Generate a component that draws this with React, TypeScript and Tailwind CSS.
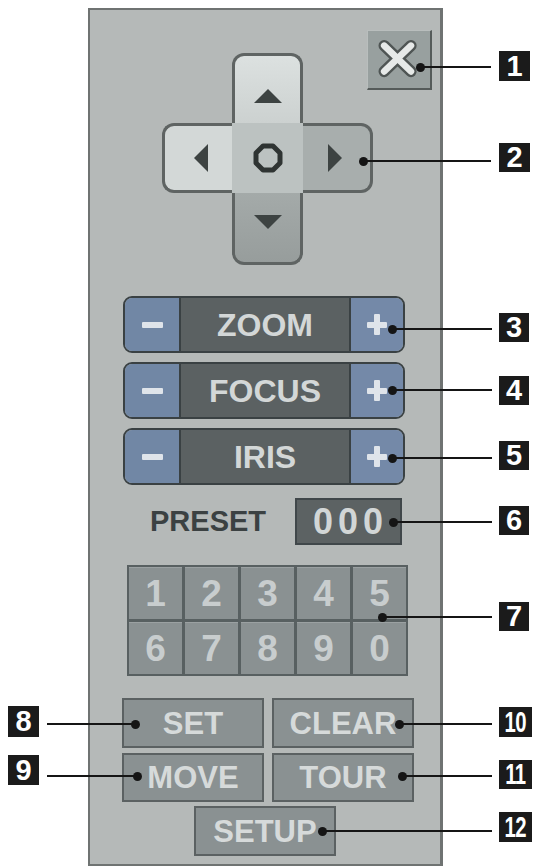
import React from "react";

// Callout annotations: dot on the control, leader line, numbered tag.
type Callout = {
  n: string;
  dot: string;
  line: string;
  tag: string;
};

const callouts: Callout[] = [
  { n: "1", dot: "left-[416px] top-[63px]", line: "left-[420px] top-[66px] w-[71px]", tag: "left-[499px] top-[51px] h-[30px] w-[31px]" },
  { n: "2", dot: "left-[359px] top-[157px]", line: "left-[363px] top-[160px] w-[128px]", tag: "left-[499px] top-[143px] h-[29px] w-[31px]" },
  { n: "3", dot: "left-[388px] top-[325px]", line: "left-[392px] top-[328px] w-[100px]", tag: "left-[499px] top-[313px] h-[29px] w-[30px]" },
  { n: "4", dot: "left-[388px] top-[386px]", line: "left-[392px] top-[389px] w-[100px]", tag: "left-[499px] top-[376px] h-[29px] w-[30px]" },
  { n: "5", dot: "left-[388px] top-[454px]", line: "left-[392px] top-[457px] w-[100px]", tag: "left-[499px] top-[441px] h-[29px] w-[30px]" },
  { n: "6", dot: "left-[389px] top-[518px]", line: "left-[393px] top-[521px] w-[99px]", tag: "left-[499px] top-[506px] h-[29px] w-[30px]" },
  { n: "7", dot: "left-[378px] top-[613px]", line: "left-[382px] top-[616px] w-[110px]", tag: "left-[499px] top-[602px] h-[29px] w-[30px]" },
  { n: "8", dot: "left-[131px] top-[720px]", line: "left-[47px] top-[723px] w-[88px]", tag: "left-[8px] top-[706px] h-[31px] w-[31px]" },
  { n: "9", dot: "left-[133px] top-[772px]", line: "left-[47px] top-[775px] w-[90px]", tag: "left-[8px] top-[755px] h-[30px] w-[31px]" },
  { n: "10", dot: "left-[395px] top-[720px]", line: "left-[399px] top-[723px] w-[93px]", tag: "left-[499px] top-[707px] h-[30px] w-[33px]" },
  { n: "11", dot: "left-[398px] top-[772px]", line: "left-[402px] top-[775px] w-[90px]", tag: "left-[499px] top-[760px] h-[29px] w-[33px]" },
  { n: "12", dot: "left-[318px] top-[827px]", line: "left-[322px] top-[830px] w-[170px]", tag: "left-[499px] top-[812px] h-[30px] w-[33px]" },
];

function Tag({ c }: { c: Callout }) {
  return (
    <>
      <div className={`absolute h-[2px] bg-[#151515] ${c.line}`} />
      <div className={`absolute h-[9px] w-[9px] rounded-full bg-[#151515] ${c.dot}`} />
      <div
        className={`absolute flex items-center justify-center bg-[#1b1b1b] text-[29px] font-bold leading-none text-white ${c.tag}`}
      >
        <span className={c.n.length > 1 ? "inline-block scale-x-[0.7] tracking-[-1px]" : ""}>{c.n}</span>
      </div>
    </>
  );
}

function Tri({ dir }: { dir: "up" | "down" | "left" | "right" }) {
  const vertical = dir === "up" || dir === "down";
  const pts = {
    up: "14,0 28,14 0,14",
    down: "0,0 28,0 14,14",
    left: "14,0 14,28 0,14",
    right: "0,0 14,14 0,28",
  }[dir];
  return (
    <svg width={vertical ? 28 : 14} height={vertical ? 14 : 28} viewBox={vertical ? "0 0 28 14" : "0 0 14 28"}>
      <polygon points={pts} fill="#3d4342" />
    </svg>
  );
}

function DPad() {
  return (
    <div className="ml-[72px] mt-[43px] grid h-[212px] w-[211px] grid-cols-[70px_71px_70px] grid-rows-[70px_70px_72px]">
      <div />
      <div className="flex items-end justify-center rounded-t-[12px] border-[3px] border-b-0 border-[#5f6463] bg-gradient-to-b from-[#dce1e0] to-[#ccd1d0] pb-[20px]">
        <Tri dir="up" />
      </div>
      <div />
      <div className="flex items-center justify-end rounded-l-[12px] border-[3px] border-r-0 border-[#5f6463] bg-[#d3d8d7] pr-[24px]">
        <Tri dir="left" />
      </div>
      <div className="flex items-center justify-center bg-[#bcc2c1]">
        <svg width="32" height="32" viewBox="0 0 32 32">
          <path d="M11 4 H21 L28 11 V21 L21 28 H11 L4 21 V11 Z" fill="none" stroke="#2f3433" strokeWidth="5" strokeLinejoin="round" />
        </svg>
      </div>
      <div className="flex items-center justify-start rounded-r-[12px] border-[3px] border-l-0 border-[#5f6463] bg-[#a8aead] pl-[25px]">
        <Tri dir="right" />
      </div>
      <div />
      <div className="flex items-start justify-center rounded-b-[12px] border-[3px] border-t-0 border-[#5f6463] bg-gradient-to-b from-[#a4aaa9] to-[#979d9c] pt-[22px]">
        <Tri dir="down" />
      </div>
      <div />
    </div>
  );
}

function Stepper({ label, first }: { label: string; first?: boolean }) {
  return (
    <div
      className={`ml-[33px] flex h-[57px] w-[282px] overflow-hidden rounded-[9px] border-2 border-[#3a4143] ${
        first ? "mt-[31px]" : "mt-[9px]"
      }`}
    >
      <div className="flex w-[56px] items-center justify-center border-r-2 border-[#3a4143] bg-[#7187a5]">
        <div className="h-[6px] w-[21px] rounded-[1px] bg-[#dfe4ea]" />
      </div>
      <div className="flex flex-1 items-center justify-center bg-[#5b6162] text-[32px] font-bold leading-none text-[#d3d7d7]">
        {label}
      </div>
      <div className="relative flex w-[54px] items-center justify-center border-l-2 border-[#3a4143] bg-[#7489a8]">
        <div className="absolute h-[6px] w-[20px] rounded-[1px] bg-[#dfe4ea]" />
        <div className="absolute h-[21px] w-[6px] rounded-[1px] bg-[#dfe4ea]" />
      </div>
    </div>
  );
}

function ActionButton({ label, className = "" }: { label: string; className?: string }) {
  return (
    <div
      className={`flex w-[142px] items-center justify-center border-2 border-[#5b6162] bg-[#8a9192] text-[31px] font-bold leading-none text-[#d6dada] ${className}`}
    >
      {label}
    </div>
  );
}

export default function App() {
  return (
    <div className="relative h-[868px] w-[537px] overflow-hidden bg-white font-['Liberation_Sans',Arial,sans-serif]">
      <div className="ml-[88px] pt-[8px]">
        <div className="relative flex h-[858px] w-[355px] flex-col border-2 border-r-[3px] border-[#6f7372] bg-[#b5b9b8]">
          {/* close button */}
          <div className="absolute right-[8px] top-[20px] flex h-[60px] w-[65px] items-center justify-center border-b-2 border-l border-r-2 border-t border-b-[#555b5a] border-l-[#b9bebd] border-r-[#555b5a] border-t-[#b9bebd] bg-[#98a09f]">
            <svg width="65" height="60" viewBox="0 0 65 60">
              <g strokeLinecap="round">
                <line x1="17" y1="15" x2="45" y2="42" stroke="#4f5554" strokeWidth="12" />
                <line x1="45" y1="15" x2="17" y2="42" stroke="#4f5554" strokeWidth="12" />
                <line x1="17" y1="15" x2="45" y2="42" stroke="#e6e9e8" strokeWidth="7" />
                <line x1="45" y1="15" x2="17" y2="42" stroke="#e6e9e8" strokeWidth="7" />
              </g>
            </svg>
          </div>

          <DPad />

          <Stepper label="ZOOM" first />
          <Stepper label="FOCUS" />
          <Stepper label="IRIS" />

          <div className="ml-[60px] mt-[13px] flex items-center">
            <span className="w-[145px] text-[29px] font-bold leading-none text-[#3b4142]">PRESET</span>
            <div className="flex h-[47px] w-[107px] items-center justify-center border-2 border-[#40474a] bg-[#5c6263] pl-[4px] text-[36px] font-bold leading-none tracking-[5px] text-[#d2d6d6]">
              000
            </div>
          </div>

          <div className="ml-[37px] mt-[20px] grid h-[111px] w-[281px] grid-cols-5 grid-rows-2 gap-[3px] bg-[#586061] p-[2px]">
            {["1", "2", "3", "4", "5", "6", "7", "8", "9", "0"].map((d) => (
              <div
                key={d}
                className="flex items-center justify-center border-t border-[#9ba1a2] bg-[#8a9192] text-[37px] font-bold leading-none text-[#c8cdce]"
              >
                {d}
              </div>
            ))}
          </div>

          <div className="ml-[32px] mt-[22px] flex gap-[8px]">
            <ActionButton label="SET" className="h-[50px]" />
            <ActionButton label="CLEAR" className="h-[50px]" />
          </div>
          <div className="ml-[32px] mt-[5px] flex gap-[8px]">
            <ActionButton label="MOVE" className="h-[49px]" />
            <ActionButton label="TOUR" className="h-[49px]" />
          </div>
          <ActionButton label="SETUP" className="ml-[104px] mt-[4px] h-[50px]" />
        </div>
      </div>

      {callouts.map((c) => (
        <Tag key={c.n} c={c} />
      ))}
    </div>
  );
}
